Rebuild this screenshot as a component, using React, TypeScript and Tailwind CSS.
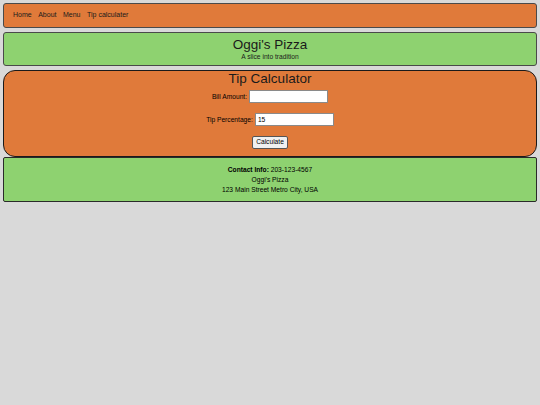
import { useState } from "react"

const links = ["Home", "About", "Menu", "Tip calculater"]

const App = () => {
  const [bill, setBill] = useState("")
  const [tip, setTip] = useState("15")

  return (
    <div className="min-h-[405px] bg-[#d9d9d9] px-[3px] pt-[3px] font-['Liberation_Sans',Arial,sans-serif] text-black">
      <nav className="flex h-[25px] items-center gap-[6.5px] rounded-[3px] border border-[#4a4a4a] bg-[#e07a3a] pl-[9px] text-[7px]">
        {links.map((l) => (
          <a key={l} href="#" className="text-[#1a1a1a]">
            {l}
          </a>
        ))}
      </nav>

      <header className="mt-[4px] flex h-[34px] flex-col items-center rounded-[3px] border border-[#4a4a4a] bg-[#8ed270] pt-[4px]">
        <h1 className="text-[13.5px] leading-[16px] text-[#1a1a1a]">Oggi's Pizza</h1>
        <p className="text-[6.67px] leading-[8px] text-[#1a1a1a]">A slice into tradition</p>
      </header>

      <main className="mt-[4px] flex h-[87px] flex-col items-center rounded-[12px] border border-[#1a1a1a] bg-[#e07a3a]">
        <h2 className="text-[13.5px] leading-[16px] text-[#1a1a1a]">Tip Calculator</h2>
        <div className="mt-[3px] flex items-center gap-[2px] text-[6.67px]">
          <label>Bill Amount:</label>
          <input
            value={bill}
            onChange={(e) => setBill(e.target.value)}
            className="h-[13px] w-[79px] border border-[#8a8a8a] bg-white px-[2px] text-[6.67px] outline-none"
          />
        </div>
        <div className="mt-[10px] flex items-center gap-[2px] text-[6.67px]">
          <label>Tip Percentage:</label>
          <input
            value={tip}
            onChange={(e) => setTip(e.target.value)}
            className="h-[13px] w-[79px] border border-[#8a8a8a] bg-white px-[2px] text-[6.67px] outline-none"
          />
        </div>
        <button className="mt-[10px] h-[13px] rounded-[2px] border border-[#555] bg-[#f0f0f0] px-[3px] text-[6.67px] leading-none">
          Calculate
        </button>
      </main>

      <footer className="flex h-[45px] flex-col items-center justify-center rounded-[2px] border border-[#2a2a2a] bg-[#8ed270] text-[6.67px] leading-[10px]">
        <p>
          <strong>Contact Info:</strong> 203-123-4567
        </p>
        <p>Oggi's Pizza</p>
        <p>123 Main Street Metro City, USA</p>
      </footer>
    </div>
  )
}

export default App
